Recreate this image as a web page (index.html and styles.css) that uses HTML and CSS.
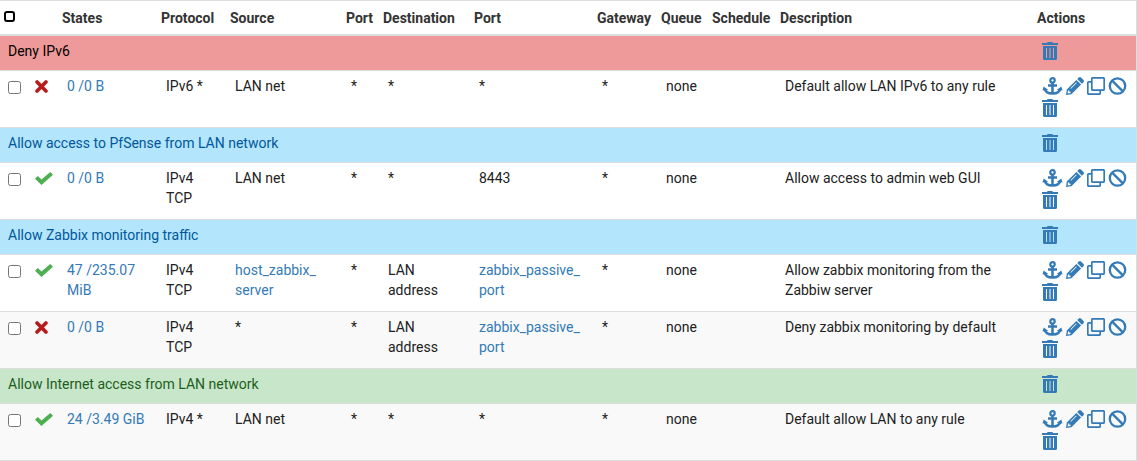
FILE: index.html
```html
<!DOCTYPE html>
<html lang="en">
<head>
<meta charset="utf-8">
<title>Firewall rules</title>
<link rel="stylesheet" href="styles.css">
</head>
<body>
<svg class="sprite" aria-hidden="true">
  <symbol id="anchor" viewBox="0 0 20 18"><path fill="none" stroke="currentColor" stroke-width="2.500" d="M10 6v11M5.500 8.600h9M2.200 11.500c.5 3.200 3.400 5 7.800 5s7.300-1.800 7.800-5"/><circle cx="10" cy="3.400" r="2.200" fill="none" stroke="currentColor" stroke-width="2.200"/><path fill="currentColor" d="M0 13.600L1.200 9.400L5.800 13ZM20 13.600L18.800 9.400L14.200 13Z"/></symbol>
  <symbol id="pencil" viewBox="0 0 18 18"><path fill="currentColor" fill-rule="evenodd" d="M10.400 2.900L15.100 7.600L5.400 17.200L0 18L.8 12.600ZM2 13.400L1.600 16.400L4.600 16V14.700H3.300V13.400ZM10.100 5.500L4.400 11.200L5 11.800L10.700 6.100ZM11.200 2.100L12.800 .5Q13.900-.4 15 .5L17.500 3Q18.400 4.100 17.500 5.200L15.900 6.800Z"/></symbol>
  <symbol id="clone" viewBox="0 0 18 18"><rect x="4.800" y=".8" width="12.400" height="12.400" rx="1" fill="none" stroke="currentColor" stroke-width="1.700"/><path fill="none" stroke="currentColor" stroke-width="1.700" d="M4.800 4.800H1.800Q.8 4.800.8 5.800V16.200Q.8 17.200 1.800 17.200H12.200Q13.200 17.200 13.200 16.200V13.200"/></symbol>
  <symbol id="ban" viewBox="0 0 18 18"><circle cx="9" cy="9" r="7.700" fill="none" stroke="currentColor" stroke-width="2.300"/><path stroke="currentColor" stroke-width="2.300" d="M3.600 3.600L14.400 14.400"/></symbol>
  <symbol id="trash" viewBox="0 0 16 18"><path fill="currentColor" fill-rule="evenodd" d="M0 1H5L5.600 0H10.400L11 1H16V3H0ZM1 4H15V16.500Q15 18 13.500 18H2.500Q1 18 1 16.500ZM4 6V16H5V6ZM7.500 6V16H8.500V6ZM11 6V16H12V6Z"/></symbol>
  <symbol id="check" viewBox="0 0 18 13"><path fill="currentColor" d="M0 6.800L2.800 4L6.500 7.600L15.300 0L18 2.700L6.500 13Z"/></symbol>
  <symbol id="times" viewBox="0 0 12 12"><path fill="none" stroke="currentColor" stroke-width="3.400" stroke-linecap="round" d="M1.900 1.900L10.100 10.100M10.100 1.900L1.900 10.100"/></symbol>
</svg>
<table class="rules">
  <colgroup><col class="c-select"><col class="c-status"><col class="c-states"><col class="c-protocol"><col class="c-source"><col class="c-sport"><col class="c-dest"><col class="c-dport"><col class="c-gateway"><col class="c-queue"><col class="c-schedule"><col><col class="c-actions"></colgroup>
  <thead>
    <tr>
      <th><button class="toggle-all" type="button" aria-label="Select all rules"></button></th>
      <th></th><th>States</th><th>Protocol</th><th>Source</th><th>Port</th><th>Destination</th><th>Port</th><th>Gateway</th><th>Queue</th><th>Schedule</th><th>Description</th><th>Actions</th>
    </tr>
  </thead>
  <tbody>
    <tr class="separator red">
      <td colspan="12">Deny IPv6</td>
      <td class="actions"><div><button type="button" aria-label="Delete"><svg class="i-trash"><use href="#trash"/></svg></button></div></td>
    </tr>
    <tr>
      <td class="select"><input type="checkbox" aria-label="Select rule"></td>
      <td class="status block"><svg class="i-times"><use href="#times"/></svg></td>
      <td><a href="#">0 /0 B</a></td><td>IPv6 *</td><td>LAN net</td><td>*</td><td>*</td><td>*</td><td>*</td><td>none</td><td></td><td>Default allow LAN IPv6 to any rule</td>
      <td class="actions"><div><button type="button" aria-label="Move"><svg class="i-anchor"><use href="#anchor"/></svg></button><button type="button" aria-label="Edit"><svg><use href="#pencil"/></svg></button><button type="button" aria-label="Copy"><svg><use href="#clone"/></svg></button><button type="button" aria-label="Disable"><svg class="i-ban"><use href="#ban"/></svg></button><button type="button" aria-label="Delete"><svg class="i-trash"><use href="#trash"/></svg></button></div></td>
    </tr>
    <tr class="separator blue">
      <td colspan="12">Allow access to PfSense from LAN network</td>
      <td class="actions"><div><button type="button" aria-label="Delete"><svg class="i-trash"><use href="#trash"/></svg></button></div></td>
    </tr>
    <tr>
      <td class="select"><input type="checkbox" aria-label="Select rule"></td>
      <td class="status pass"><svg class="i-check"><use href="#check"/></svg></td>
      <td><a href="#">0 /0 B</a></td><td>IPv4 TCP</td><td>LAN net</td><td>*</td><td>*</td><td>8443</td><td>*</td><td>none</td><td></td><td>Allow access to admin web GUI</td>
      <td class="actions"><div><button type="button" aria-label="Move"><svg class="i-anchor"><use href="#anchor"/></svg></button><button type="button" aria-label="Edit"><svg><use href="#pencil"/></svg></button><button type="button" aria-label="Copy"><svg><use href="#clone"/></svg></button><button type="button" aria-label="Disable"><svg class="i-ban"><use href="#ban"/></svg></button><button type="button" aria-label="Delete"><svg class="i-trash"><use href="#trash"/></svg></button></div></td>
    </tr>
    <tr class="separator blue">
      <td colspan="12">Allow Zabbix monitoring traffic</td>
      <td class="actions"><div><button type="button" aria-label="Delete"><svg class="i-trash"><use href="#trash"/></svg></button></div></td>
    </tr>
    <tr>
      <td class="select"><input type="checkbox" aria-label="Select rule"></td>
      <td class="status pass"><svg class="i-check"><use href="#check"/></svg></td>
      <td><a href="#">47 /235.07 MiB</a></td><td>IPv4 TCP</td><td><a href="#">host_zabbix_<wbr>server</a></td><td>*</td><td>LAN address</td><td><a href="#">zabbix_passive_<wbr>port</a></td><td>*</td><td>none</td><td></td><td>Allow zabbix monitoring from the Zabbiw server</td>
      <td class="actions"><div><button type="button" aria-label="Move"><svg class="i-anchor"><use href="#anchor"/></svg></button><button type="button" aria-label="Edit"><svg><use href="#pencil"/></svg></button><button type="button" aria-label="Copy"><svg><use href="#clone"/></svg></button><button type="button" aria-label="Disable"><svg class="i-ban"><use href="#ban"/></svg></button><button type="button" aria-label="Delete"><svg class="i-trash"><use href="#trash"/></svg></button></div></td>
    </tr>
    <tr class="shaded">
      <td class="select"><input type="checkbox" aria-label="Select rule"></td>
      <td class="status block"><svg class="i-times"><use href="#times"/></svg></td>
      <td><a href="#">0 /0 B</a></td><td>IPv4 TCP</td><td>*</td><td>*</td><td>LAN address</td><td><a href="#">zabbix_passive_<wbr>port</a></td><td>*</td><td>none</td><td></td><td>Deny zabbix monitoring by default</td>
      <td class="actions"><div><button type="button" aria-label="Move"><svg class="i-anchor"><use href="#anchor"/></svg></button><button type="button" aria-label="Edit"><svg><use href="#pencil"/></svg></button><button type="button" aria-label="Copy"><svg><use href="#clone"/></svg></button><button type="button" aria-label="Disable"><svg class="i-ban"><use href="#ban"/></svg></button><button type="button" aria-label="Delete"><svg class="i-trash"><use href="#trash"/></svg></button></div></td>
    </tr>
    <tr class="separator green">
      <td colspan="12">Allow Internet access from LAN network</td>
      <td class="actions"><div><button type="button" aria-label="Delete"><svg class="i-trash"><use href="#trash"/></svg></button></div></td>
    </tr>
    <tr class="shaded">
      <td class="select"><input type="checkbox" aria-label="Select rule"></td>
      <td class="status pass"><svg class="i-check"><use href="#check"/></svg></td>
      <td><a href="#">24 /3.49 GiB</a></td><td>IPv4 *</td><td>LAN net</td><td>*</td><td>*</td><td>*</td><td>*</td><td>none</td><td></td><td>Default allow LAN to any rule</td>
      <td class="actions"><div><button type="button" aria-label="Move"><svg class="i-anchor"><use href="#anchor"/></svg></button><button type="button" aria-label="Edit"><svg><use href="#pencil"/></svg></button><button type="button" aria-label="Copy"><svg><use href="#clone"/></svg></button><button type="button" aria-label="Disable"><svg class="i-ban"><use href="#ban"/></svg></button><button type="button" aria-label="Delete"><svg class="i-trash"><use href="#trash"/></svg></button></div></td>
    </tr>
  </tbody>
</table>
</body>
</html>
```
FILE: styles.css
```css
* { box-sizing: border-box; }
body {
  margin: 0;
  background: #fff;
  color: #212121;
  font: 14px/20px Roboto, sans-serif;
}
.sprite { display: none; }
.rules {
  width: 100%;
  table-layout: fixed;
  border-collapse: separate;
  border-spacing: 0;
  border-top: 1px solid #ddd;
  border-right: 1px solid #ddd;
}
.c-select { width: 30px; }
.c-status { width: 27px; }
.c-states { width: 99px; }
.c-protocol { width: 69px; }
.c-source { width: 116px; }
.c-sport { width: 37px; }
.c-dest { width: 91px; }
.c-dport { width: 123px; }
.c-gateway { width: 64px; }
.c-queue { width: 51px; }
.c-schedule { width: 68px; }
.c-actions { width: 104px; }
th {
  padding: 7px 0 6px 5px;
  border-bottom: 2px solid #ddd;
  color: #333;
  font-weight: 700;
  text-align: left;
  vertical-align: top;
  white-space: nowrap;
}
th:first-child { padding-left: 4px; }
td {
  padding: 5px 10px;
  border-bottom: 1px solid #ddd;
  vertical-align: top;
}
td:nth-child(3), td:nth-child(4) { padding-right: 5px; }
a { color: #337ab7; text-decoration: none; }
.toggle-all {
  display: block;
  width: 11px;
  height: 11px;
  margin: 3px 0 0;
  padding: 0;
  border: 2px solid #000;
  border-radius: 3px;
  background: #fff;
}
.select { padding: 10px 0 0 8px; }
.select input {
  display: block;
  width: 13px;
  height: 13px;
  margin: 0;
}
.status { padding: 9px 0 0 5px; }
.status svg { display: block; }
.i-check { width: 18px; height: 13px; }
.i-times { width: 13px; height: 13px; }
.pass { color: #4caf50; }
.block { color: #b71c1c; }
.separator td { padding-left: 8px; }
.red td { background: #ef9a9a; color: #000; }
.blue td { background: #b3e5fc; color: #01579b; }
.green td { background: #c8e6c9; color: #1b5e20; }
.shaded td { background: #f9f9f9; }
.rules td.actions { padding: 4px 0 8px 10px; }
.actions div {
  display: flex;
  flex-wrap: wrap;
  column-gap: 3px;
}
.actions button {
  display: flex;
  align-items: center;
  height: 22px;
  padding: 0;
  border: 0;
  background: none;
  color: #337ab7;
}
.actions svg { width: 18px; height: 18px; }
.actions .i-anchor { width: 21px; }
.actions .i-ban { width: 19px; }
.actions .i-trash { width: 16px; }
```
